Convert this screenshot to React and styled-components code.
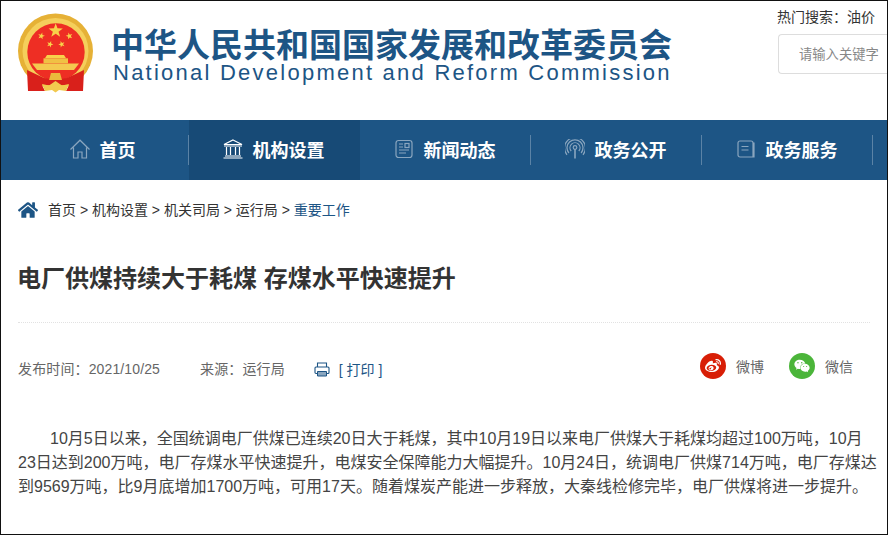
import React from 'react'
import styled, { createGlobalStyle } from 'styled-components'
import { FaHome, FaWeibo, FaWeixin } from 'react-icons/fa'

const blue = '#1d5585'
const cjk = `"Liberation Sans", "Noto Sans CJK SC", sans-serif`

const GlobalStyle = createGlobalStyle`
  html, body {
    background: #fff;
    margin: 0;
    padding: 0;
  }
  * {
    box-sizing: border-box;
  }
`
const Frame = styled.div`
  background: #fff;
  border: 1px solid #111;
  font-family: ${cjk};
  height: 535px;
  overflow: hidden;
  width: 888px;
`
const Header = styled.header`
  display: flex;
  height: 119px;
  justify-content: space-between;
  padding-left: 17px;
`
const Brand = styled.div`
  align-items: flex-start;
  display: flex;
  gap: 17px;
  padding-top: 12px;
`
const BrandText = styled.div`
  color: ${blue};
  display: flex;
  flex-flow: column;
  padding-top: 17px;
  white-space: nowrap;
`
const BrandCn = styled.div`
  font-size: 33px;
  font-weight: 700;
  height: 31px;
  line-height: 32px;
`
const BrandEn = styled.div`
  font-size: 22px;
  height: 24px;
  letter-spacing: 2.24px;
  line-height: 24px;
  padding-left: 2px;
`
const SearchArea = styled.div`
  display: flex;
  flex-flow: column;
  gap: 7px;
  padding-top: 7px;
  width: 109px;
`
const HotWords = styled.div`
  color: #333;
  font-size: 14px;
  line-height: 19px;
  margin-left: -1px;
  white-space: nowrap;
`
const SearchInput = styled.input`
  background: #fff;
  border: 1px solid #ddd;
  border-radius: 4px 0 0 4px;
  border-right: 0;
  color: #333;
  font-family: ${cjk};
  font-size: 13.3px;
  height: 40px;
  outline: none;
  padding: 0 0 0 20px;
  width: 109px;
  &::placeholder {
    color: #888;
    opacity: 1;
  }
`
const Nav = styled.nav`
  background: ${blue};
  display: flex;
  height: 60px;
  padding-left: 17px;
`
const NavItem = styled.a`
  align-items: center;
  background: ${props => (props.$active ? '#174a76' : 'transparent')};
  color: #fff;
  display: flex;
  flex: 0 0 171px;
  font-size: 18px;
  font-weight: 700;
  gap: 10px;
  justify-content: center;
  padding: 0 2px 2px 0;
  position: relative;
  &::after {
    background: #5b83a6;
    content: '';
    display: ${props => (props.$active ? 'none' : 'block')};
    height: 30px;
    position: absolute;
    right: 0;
    top: 15px;
    width: 1px;
  }
`
const NavIcon = styled.svg`
  display: block;
  fill: none;
  flex: none;
  height: 20px;
  stroke: ${props => (props.$active ? '#fff' : '#8aa6bf')};
  stroke-width: 1.2;
  width: 20px;
`
const Crumbs = styled.div`
  align-items: center;
  color: #333;
  display: flex;
  font-size: 14px;
  gap: 10px;
  height: 60px;
  padding: 0 0 2px 17px;
  white-space: nowrap;
`
const CrumbHome = styled(FaHome)`
  color: ${blue};
  font-size: 20px;
  margin-top: 2px;
`
const CrumbCurrent = styled.span`
  color: ${blue};
`
const Article = styled.main`
  padding: 0 17px;
`
const Title = styled.h1`
  border-bottom: 1px dotted #e2e2e2;
  color: #333;
  font-size: 24px;
  font-weight: 700;
  height: 83px;
  line-height: 78px;
  margin: 0;
  text-indent: -1px;
  white-space: nowrap;
`
const Meta = styled.div`
  align-items: center;
  color: #666;
  display: flex;
  font-size: 14px;
  height: 91px;
  padding-bottom: 2px;
`
const MetaItem = styled.span`
  letter-spacing: 0.13px;
  margin-right: 40px;
`
const Print = styled.span`
  align-items: center;
  color: ${blue};
  display: flex;
  gap: 9px;
  margin: 2px 0 0 -11px;
`
const PrintSvg = styled.svg`
  display: block;
  margin-top: 2px;
`
const Share = styled.div`
  align-items: center;
  display: flex;
  gap: 25px;
  margin: -4px 17px 0 auto;
`
const ShareLink = styled.span`
  align-items: center;
  display: flex;
  gap: 10px;
`
const ShareCircle = styled.span`
  align-items: center;
  background: ${props => props.$bg};
  border-radius: 50%;
  color: #fff;
  display: flex;
  font-size: 16px;
  height: 26px;
  justify-content: center;
  width: 26px;
`
const Paragraph = styled.p`
  color: #444;
  font-size: 16px;
  line-height: 24px;
  margin: 13px 0 0;
  text-indent: 2em;
  width: 860px;
`
const EmblemSvg = styled.svg`
  display: block;
  flex: none;
`

const Star = ({ x, y, r, rot = 0 }) => {
  const pts = []
  for (let i = 0; i < 10; i++) {
    const rad = i % 2 ? r * 0.4 : r
    const a = ((i * 36 + rot - 90) * Math.PI) / 180
    pts.push(`${(x + rad * Math.cos(a)).toFixed(2)},${(y + rad * Math.sin(a)).toFixed(2)}`)
  }
  return <polygon points={pts.join(' ')} fill="#f8d24a" />
}

const Emblem = () => (
  <EmblemSvg width="76" height="82" viewBox="0 0 76 82">
    <circle cx="37.5" cy="38" r="37.5" fill="#e6b136" />
    <circle cx="37.5" cy="38" r="33" fill="#f5cf5b" />
    <circle cx="38" cy="39" r="28.7" fill="#ee2e24" />
    <Star x={37.7} y={17.7} r={7.5} />
    <Star x={23.3} y={23} r={3.6} rot={15} />
    <Star x={51.3} y={23} r={3.6} rot={-15} />
    <Star x={32} y={31.3} r={3.4} rot={20} />
    <Star x={43.7} y={31.3} r={3.4} rot={-20} />
    <path d="M29 42h17l2 3.3H27z" fill="#f8d24a" />
    <path d="M25.5 45.3h24.5v5H25.5z" fill="#f0c144" />
    <path d="M14 50.5h47l-5 6.5H19z" fill="#f4c94f" />
    <path d="M9 57 L26 65 L33 66 L33 72 L24 72 L27 78 L10 78z" fill="#d9201b" />
    <path d="M66 57 L49 65 L42 66 L42 72 L51 72 L48 78 L65 78z" fill="#d9201b" />
    <path d="M33 60h9l2 7H31z" fill="#eab83c" />
    <path d="M31 67h13v5H31z" fill="#d9201b" />
    <path d="M24 71 L31 72.5 L37.5 68 L44 72.5 L51 71 L48 78 L41 77 L37.5 79.5 L34 77 L27 78z" fill="#f2c94f" />
  </EmblemSvg>
)

const HomeIcon = () => (
  <NavIcon viewBox="0 0 20 20">
    <path d="M0.5 10.5 10 1.2l9.5 9.3M3.5 8.5V19H8v-6h4v6h4.5V8.5" />
  </NavIcon>
)
const BankIcon = () => (
  <NavIcon viewBox="0 0 20 20" $active>
    <path d="M10 1 19 5.5H1zM1 7h18M3.5 8v8M7.5 8v8M12.5 8v8M16.5 8v8M2 17h16M0.5 19h19" />
  </NavIcon>
)
const NewsIcon = () => (
  <NavIcon viewBox="0 0 20 20">
    <rect x="2" y="1.5" width="16" height="17" rx="2.5" />
    <path d="M5 5h4M5 8h4M5 11h10M5 14h7" />
    <rect x="11" y="4.5" width="4" height="4" />
  </NavIcon>
)
const SignalIcon = () => (
  <NavIcon viewBox="0 0 20 20">
    <path d="M10 10v9.5" strokeWidth="1.6" />
    <circle cx="10" cy="8.5" r="1.8" />
    <path d="M6.2 12a5 5 0 1 1 7.6 0M3.9 14a8 8 0 1 1 12.2 0M2 15.8A10.5 10.5 0 1 1 18 15.8" />
  </NavIcon>
)
const BookIcon = () => (
  <NavIcon viewBox="0 0 20 20">
    <path d="M4 2h11a2 2 0 0 1 2 2v14H4a2 2 0 0 1-2-2V4a2 2 0 0 1 2-2zM17 4h1v14h-1" />
    <path d="M5.5 7.5h7M5.5 11h7" />
  </NavIcon>
)
const PrintIcon = () => (
  <PrintSvg width="16" height="15" viewBox="0 0 16 15">
    <path d="M3.5 5V1h9v4M3 11.5H2a1 1 0 0 1-1-1V6a1 1 0 0 1 1-1h12a1 1 0 0 1 1 1v4.5a1 1 0 0 1-1 1h-1" fill="none" stroke={blue} strokeWidth="1.1" />
    <path d="M3.5 9.5h9v4.5h-9z" fill="#8aa6bf" stroke={blue} />
  </PrintSvg>
)

const navItems = [
  { label: '首页', Icon: HomeIcon },
  { label: '机构设置', Icon: BankIcon, active: true },
  { label: '新闻动态', Icon: NewsIcon },
  { label: '政务公开', Icon: SignalIcon },
  { label: '政务服务', Icon: BookIcon }
]

const App = () => (
  <Frame>
    <GlobalStyle />
    <Header>
      <Brand>
        <Emblem />
        <BrandText>
          <BrandCn>中华人民共和国国家发展和改革委员会</BrandCn>
          <BrandEn>National Development and Reform Commission</BrandEn>
        </BrandText>
      </Brand>
      <SearchArea>
        <HotWords>热门搜索：油价</HotWords>
        <SearchInput placeholder="请输入关键字" />
      </SearchArea>
    </Header>
    <Nav>
      {navItems.map(({ label, Icon, active }) => (
        <NavItem key={label} $active={active}>
          <Icon />
          {label}
        </NavItem>
      ))}
    </Nav>
    <Crumbs>
      <CrumbHome />
      <div>
        首页 &gt; 机构设置 &gt; 机关司局 &gt; 运行局 &gt; <CrumbCurrent>重要工作</CrumbCurrent>
      </div>
    </Crumbs>
    <Article>
      <Title>电厂供煤持续大于耗煤 存煤水平快速提升</Title>
      <Meta>
        <MetaItem>发布时间：2021/10/25</MetaItem>
        <MetaItem>来源：运行局</MetaItem>
        <Print>
          <PrintIcon />
          [ 打印 ]
        </Print>
        <Share>
          <ShareLink>
            <ShareCircle $bg="#d81e06"><FaWeibo /></ShareCircle>
            微博
          </ShareLink>
          <ShareLink>
            <ShareCircle $bg="#4bb53a"><FaWeixin /></ShareCircle>
            微信
          </ShareLink>
        </Share>
      </Meta>
      <Paragraph>
        10月5日以来，全国统调电厂供煤已连续20日大于耗煤，其中10月19日以来电厂供煤大于耗煤均超过100万吨，10月23日达到200万吨，电厂存煤水平快速提升，电煤安全保障能力大幅提升。10月24日，统调电厂供煤714万吨，电厂存煤达到9569万吨，比9月底增加1700万吨，可用17天。随着煤炭产能进一步释放，大秦线检修完毕，电厂供煤将进一步提升。
      </Paragraph>
    </Article>
  </Frame>
)

export default App
